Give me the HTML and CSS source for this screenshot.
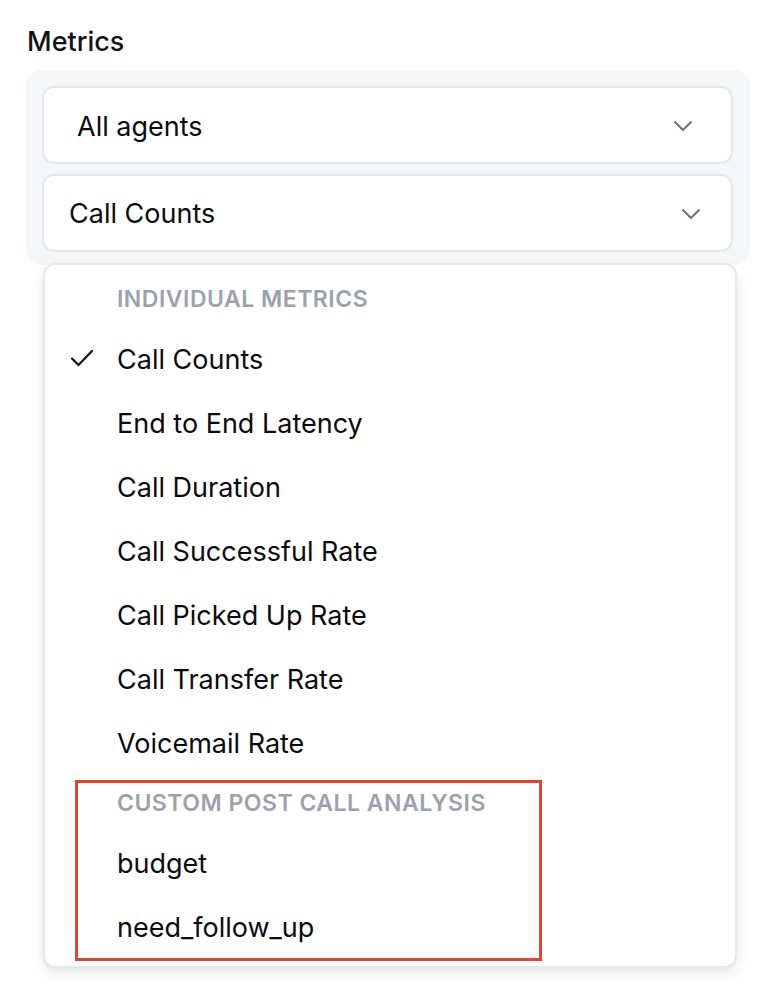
FILE: index.html
```html
<!DOCTYPE html>
<html>
<head>
<meta charset="utf-8">
<link rel="stylesheet" href="styles.css">
</head>
<body>
<div class="page">
  <div class="label">Metrics</div>
  <div class="panel">
    <div class="select select-agents">
      <span>All agents</span>
      <svg class="chev" width="20" height="12" viewBox="0 0 20 12"><path d="M2 2 L10 10 L18 2" fill="none" stroke="#6f6f6f" stroke-width="2" stroke-linecap="round" stroke-linejoin="round"/></svg>
    </div>
    <div class="select select-metric">
      <span>Call Counts</span>
      <svg class="chev" width="20" height="12" viewBox="0 0 20 12"><path d="M2 2 L10 10 L18 2" fill="none" stroke="#6f6f6f" stroke-width="2" stroke-linecap="round" stroke-linejoin="round"/></svg>
    </div>
  </div>
  <div class="menu">
    <div class="group-title">INDIVIDUAL METRICS</div>
    <div class="item selected">
      <svg class="check" width="24" height="18" viewBox="0 0 24 18"><path d="M2 9.5 L8.5 16 L22 2" fill="none" stroke="#111" stroke-width="2.2" stroke-linecap="round" stroke-linejoin="round"/></svg>
      <span>Call Counts</span>
    </div>
    <div class="item"><span>End to End Latency</span></div>
    <div class="item"><span>Call Duration</span></div>
    <div class="item"><span>Call Successful Rate</span></div>
    <div class="item"><span>Call Picked Up Rate</span></div>
    <div class="item"><span>Call Transfer Rate</span></div>
    <div class="item"><span>Voicemail Rate</span></div>
    <div class="group-title">CUSTOM POST CALL ANALYSIS</div>
    <div class="item"><span>budget</span></div>
    <div class="item"><span>need_follow_up</span></div>
  </div>
  <div class="highlight"></div>
</div>
</body>
</html>
```

FILE: styles.css
```css
* { box-sizing: border-box; }
html, body {
  margin: 0;
  padding: 0;
  background: #ffffff;
}
body {
  font-family: Inter, "Noto Sans", sans-serif;
  color: #0b0b0f;
}
.page {
  position: relative;
  width: 766px;
  height: 994px;
  padding-top: 26px;
}
.label {
  margin-left: 27px;
  font-size: 27px;
  font-weight: 500;
  line-height: 32px;
  color: #111318;
}
.panel {
  margin-top: 12px;
  margin-left: 26px;
  width: 724px;
  background: #f5f6f9;
  border-radius: 16px;
  padding: 16px 17px 13px 16px;
  display: flex;
  flex-direction: column;
  gap: 10px;
}
.select {
  height: 78px;
  background: #ffffff;
  border: 2px solid #e5e5e7;
  border-radius: 12px;
  display: flex;
  align-items: center;
  justify-content: space-between;
  font-size: 27px;
  color: #0b0b0f;
}
.select-agents { padding: 2px 38px 0 33px; }
.select-metric { padding: 1px 30px 0 25px; }
.chev { display: block; }
.menu {
  position: absolute;
  left: 43px;
  top: 263px;
  width: 694px;
  background: #ffffff;
  border: 2px solid #e7e7e9;
  border-radius: 12px;
  box-shadow: 0 6px 14px rgba(0, 0, 0, 0.08), 0 2px 4px rgba(0, 0, 0, 0.04);
  padding: 6px 0 7px 0;
}
.group-title {
  height: 56px;
  display: flex;
  align-items: center;
  padding-left: 72px;
  font-size: 23px;
  font-weight: 600;
  letter-spacing: 0.5px;
  color: #9ca1ae;
}
.item {
  position: relative;
  height: 64px;
  display: flex;
  align-items: center;
  padding-left: 72px;
  padding-top: 1px;
  font-size: 27px;
  color: #0b0b0f;
}
.check {
  position: absolute;
  left: 25px;
  top: 22px;
}
.highlight {
  position: absolute;
  left: 75px;
  top: 780px;
  width: 467px;
  height: 181px;
  border: 3px solid #e6432d;
}
```
